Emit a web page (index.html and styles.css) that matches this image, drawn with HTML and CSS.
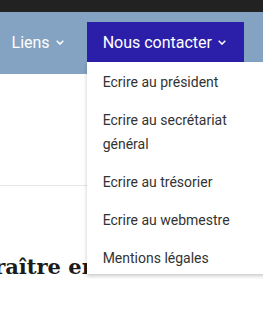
FILE: index.html
```html
<!DOCTYPE html>
<html lang="fr">
<head>
    <meta charset="UTF-8">
    <title>Nous contacter</title>
    <link rel="stylesheet" href="styles.css">
</head>
<body>
    <div class="topbar"></div>

    <nav class="mainnav">
        <div class="navitem">
            <span>Liens</span>
            <svg class="chev" viewBox="0 0 8 5" width="8" height="5"><path d="M0.7 0.8 L4 4.1 L7.3 0.8" /></svg>
        </div>
        <div class="navitem active">
            <span>Nous contacter</span>
            <svg class="chev" viewBox="0 0 8 5" width="8" height="5"><path d="M0.7 0.8 L4 4.1 L7.3 0.8" /></svg>
            <ul class="dropdown">
                <li>Ecrire au président</li>
                <li>Ecrire au secrétariat général</li>
                <li>Ecrire au trésorier</li>
                <li>Ecrire au webmestre</li>
                <li>Mentions légales</li>
            </ul>
        </div>
    </nav>

    <div class="content">
        <div class="rule"></div>
        <h2 class="title">Vient de paraître en</h2>
    </div>
</body>
</html>
```

FILE: styles.css
```css
html {
    overflow: hidden;
}
body {
    margin: 0;
    padding: 0;
    background: #fff;
    font-family: Roboto, "Liberation Sans", sans-serif;
}

.topbar {
    height: 12px;
    background: #222222;
}

.mainnav {
    position: relative;
    z-index: 20;
    display: flex;
    justify-content: flex-end;
    gap: 5px;
    height: 62px;
    padding: 10px 19px 0 0;
    box-sizing: border-box;
    background: #84a2c2;
}

.navitem {
    position: relative;
    display: flex;
    align-items: center;
    gap: 6px;
    flex-shrink: 0;
    height: 40px;
    padding: 0 18px 0 16px;
    color: #fff;
    font-size: 16px;
    white-space: nowrap;
}
.navitem.active { background: #2b1fa9; }

.chev {
    fill: none;
    stroke: #fff;
    stroke-width: 1.5;
    margin-top: 1px;
}

.dropdown {
    position: absolute;
    top: 100%;
    left: 0;
    z-index: 10;
    width: 196px;
    margin: 0;
    padding: 1px 0 0 0;
    list-style: none;
    background: #fff;
    box-shadow: 0 2px 4px rgba(0,0,0,0.22);
}
.dropdown li {
    padding: 7px 16px;
    font-size: 14px;
    line-height: 24px;
    color: #333;
    white-space: normal;
    width: 150px;
}
.dropdown li:last-child { padding-bottom: 4px; }

.content {
    padding-top: 111px;
}
.rule {
    height: 1px;
    background: #e6e6e6;
}
.title {
    margin: 68px 0 0 -139px;
    font-family: "DejaVu Serif", serif;
    font-weight: bold;
    font-size: 21px;
    color: #1b1b1b;
    white-space: nowrap;
}
```
